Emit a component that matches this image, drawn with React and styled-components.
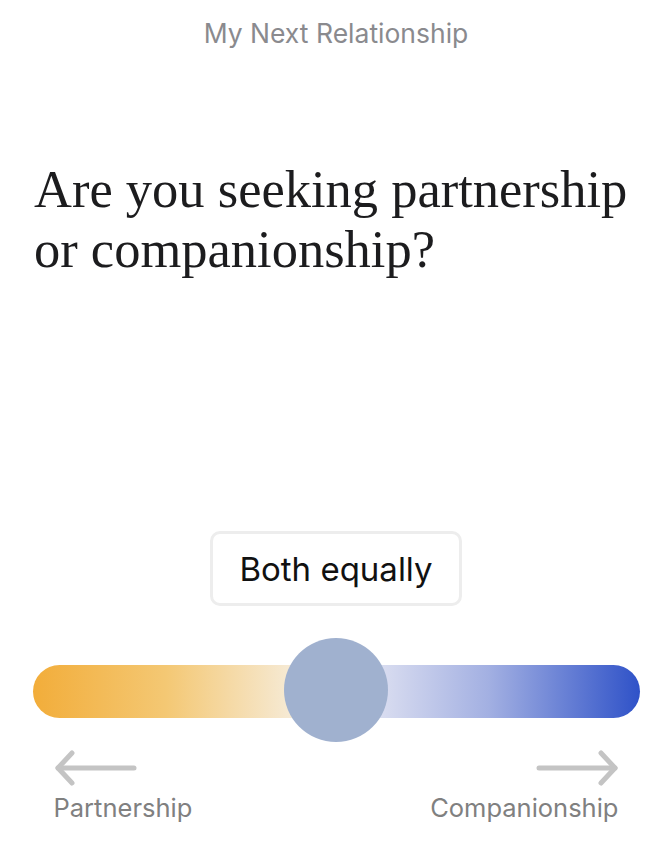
import styled, { createGlobalStyle } from "styled-components";

const GlobalStyle = createGlobalStyle`
    html, body {
        margin: 0;
        padding: 0;
        background: #ffffff;
    }
`;

const Screen = styled.div`
    width: 672px;
    height: 856px;
    box-sizing: border-box;
    padding: 14px 33px 0 33px;
    display: flex;
    flex-direction: column;
    font-family: Inter, "Noto Sans", sans-serif;
`;

const Header = styled.div`
    text-align: center;
    font-size: 26.5px;
    color: #8a8a8e;
    line-height: 38px;
`;

const Question = styled.h1`
    margin: 107px 0 0 1px;
    font-family: "Liberation Serif", "DejaVu Serif", serif;
    font-weight: 400;
    font-size: 52.5px;
    line-height: 60px;
    color: #1c1c1e;
`;

const Bottom = styled.div`
    margin-top: auto;
    padding-bottom: 32px;
    display: flex;
    flex-direction: column;
    align-items: center;
`;

const ValueBox = styled.div`
    width: 252px;
    height: 75px;
    box-sizing: border-box;
    border: 3px solid #ededed;
    border-radius: 10px;
    display: flex;
    align-items: center;
    justify-content: center;
    font-size: 33px;
    color: #111;
`;

const TrackWrap = styled.div`
    position: relative;
    width: 607px;
    height: 106px;
    margin-top: 32px;
    display: flex;
    align-items: center;
`;

const Track = styled.div`
    width: 100%;
    height: 53px;
    border-radius: 27px;
    background: linear-gradient(
        90deg,
        #f2ad3a 0%,
        #f4c874 22%,
        #f6e9d2 42%,
        #f2eee8 46%,
        #dde0f1 56%,
        #a3b0e2 75%,
        #2f52c8 100%
    );
`;

const Thumb = styled.div`
    position: absolute;
    top: 0;
    width: 104px;
    height: 104px;
    border-radius: 50%;
    background: #a0b1cf;
`;

const Ends = styled.div`
    width: 607px;
    display: flex;
    justify-content: space-between;
    padding: 0 21px;
    box-sizing: border-box;
    margin-top: 6px;
`;

const End = styled.div`
    display: flex;
    flex-direction: column;
    align-items: ${(p) => (p.right ? "flex-end" : "flex-start")};
    gap: 6px;
`;

const EndLabel = styled.span`
    font-size: 25.5px;
    color: #808080;
    line-height: 32px;
`;

const Arrow = ({ right }) => (
    <svg width="84" height="36" viewBox="0 0 84 36" fill="none">
        <g
            stroke="#c4c4c4"
            strokeWidth="5"
            strokeLinecap="round"
            strokeLinejoin="round"
            transform={right ? "translate(84 0) scale(-1 1)" : undefined}
        >
            <path d="M4 18 H80" />
            <path d="M18 3 L4 18 L18 33" />
        </g>
    </svg>
);

export default function App() {
    const value = 0.5;
    return (
        <>
            <GlobalStyle />
            <Screen>
                <Header>My Next Relationship</Header>
                <Question>
                    Are you seeking partnership
                    <br />
                    or companionship?
                </Question>
                <Bottom>
                    <ValueBox>Both equally</ValueBox>
                    <TrackWrap>
                        <Track />
                        <Thumb style={{ left: `calc(${value * 100}% - 52px)` }} />
                    </TrackWrap>
                    <Ends>
                        <End>
                            <Arrow />
                            <EndLabel>Partnership</EndLabel>
                        </End>
                        <End right>
                            <Arrow right />
                            <EndLabel>Companionship</EndLabel>
                        </End>
                    </Ends>
                </Bottom>
            </Screen>
        </>
    );
}
